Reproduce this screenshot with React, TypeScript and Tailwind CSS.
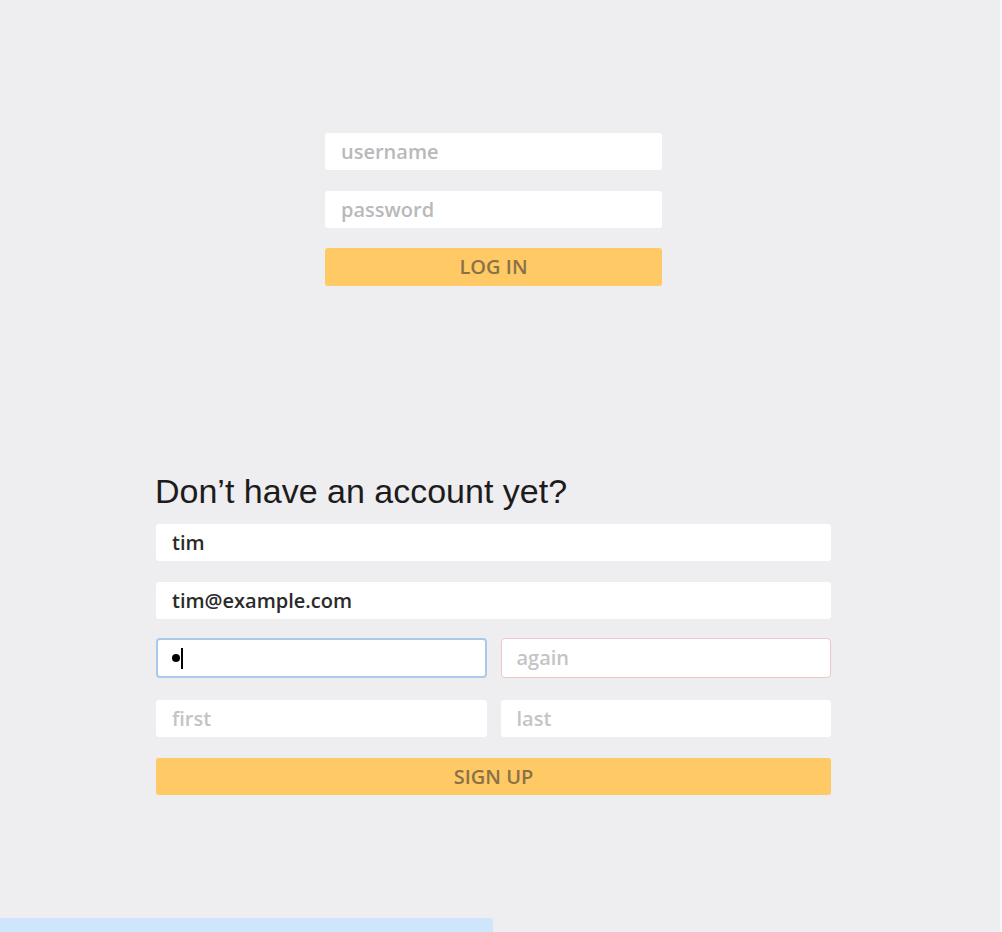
import React from "react";

const inputBase =
  "h-[37px] bg-white rounded-[3px] flex items-center px-4 text-[20px] font-semibold";

export default function App() {
  return (
    <div
      className="w-[1002px] h-[932px] bg-[#eeedef] relative overflow-hidden"
      style={{ fontFamily: "'Open Sans', 'Liberation Sans', sans-serif" }}
    >
      <div className="w-[987px] flex flex-col items-center pt-[133px]">
        {/* Login */}
        <div className="w-[337px] flex flex-col gap-[21px]">
          <div className={`${inputBase} text-[#b9b9bb]`}>username</div>
          <div className={`${inputBase} text-[#b9b9bb]`}>password</div>
          <div className="h-[38px] -mt-[1px] bg-[#ffc966] rounded-[3px] flex items-center justify-center text-[20px] font-semibold text-[#8a7146]">
            LOG IN
          </div>
        </div>

        {/* Signup */}
        <div className="w-[675px] mt-[186px] flex flex-col">
          <h2
            className="text-[34px] leading-[38px] text-[#1c1c1c] -ml-[1px]"
            style={{ fontFamily: "'Liberation Sans', Arial, sans-serif" }}
          >
            Don’t have an account yet?
          </h2>
          <div className="mt-[14px] flex flex-col">
            <div className={`${inputBase} text-[#2a2a2a]`}>tim</div>
            <div className={`${inputBase} mt-[21px] text-[#2a2a2a]`}>tim@example.com</div>
            <div className="flex gap-[14px] mt-[19px]">
              <div className="flex-1 h-[40px] bg-white rounded-[4px] border-2 border-[#a9c9ec] flex items-center px-[14px]">
                <span className="w-[8px] h-[8px] rounded-full bg-black" />
                <span className="w-[1.5px] h-[21px] bg-black ml-[1px]" />
              </div>
              <div className="flex-1 h-[40px] bg-white rounded-[4px] border border-[#efc6cb] flex items-center px-[15px] text-[20px] font-semibold text-[#c4c4c6]">
                again
              </div>
            </div>
            <div className="flex gap-[14px] mt-[22px]">
              <div className={`${inputBase} flex-1 text-[#c4c4c6]`}>first</div>
              <div className={`${inputBase} flex-1 text-[#c4c4c6]`}>last</div>
            </div>
            <div className="h-[37px] mt-[21px] bg-[#ffc966] rounded-[3px] flex items-center justify-center text-[20px] font-semibold text-[#8a7146]">
              SIGN UP
            </div>
          </div>
        </div>
      </div>

      {/* bottom progress bar */}
      <div className="absolute left-0 bottom-0 w-[493px] h-[14px] bg-[#cfe5fb] rounded-tr-[3px]" />
      <div className="absolute right-0 top-0 w-[2px] h-full bg-[#f7f7f8]" />
    </div>
  );
}
